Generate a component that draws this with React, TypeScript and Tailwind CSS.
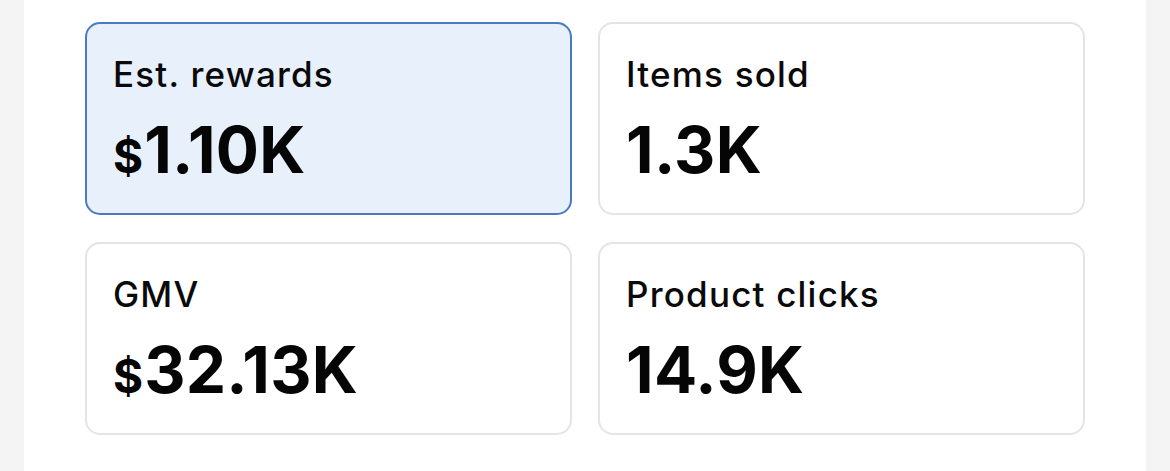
import React from "react";

type Stat = { label: string; value: string; dollar?: boolean; active?: boolean };

const stats: Stat[] = [
  { label: "Est. rewards", value: "1.10K", dollar: true, active: true },
  { label: "Items sold", value: "1.3K" },
  { label: "GMV", value: "32.13K", dollar: true },
  { label: "Product clicks", value: "14.9K" },
];

function Card({ s }: { s: Stat }) {
  return (
    <div
      className={
        s.active
          ? "h-[193px] rounded-[15px] border-2 border-[#4a7bbd] bg-[#e7f0fb] pl-[26px] pt-[33px]"
          : "h-[193px] rounded-[15px] border-2 border-[#e4e4e4] bg-white pl-[26px] pt-[33px]"
      }
    >
      <div className="text-[35px] leading-none font-medium text-[#0a0a0a] tracking-[1.2px]">{s.label}</div>
      <div className="mt-[26px] flex items-baseline text-[#050505] font-bold leading-none">
        {s.dollar && <span className="text-[46px] mr-[1px]">$</span>}
        <span className="text-[64px] tracking-[0.3px]">{s.value}</span>
      </div>
    </div>
  );
}

export default function App() {
  return (
    <div
      className="w-[1170px] h-[471px] bg-[#f4f4f4] flex"
      style={{ fontFamily: "Inter, 'Liberation Sans', sans-serif" }}
    >
      <div className="ml-[24px] w-[1122px] h-full bg-white px-[61px] pt-[22px]">
        <div className="grid grid-cols-2 gap-x-[26px] gap-y-[27px]">
          {stats.map((s) => (
            <Card key={s.label} s={s} />
          ))}
        </div>
      </div>
    </div>
  );
}
